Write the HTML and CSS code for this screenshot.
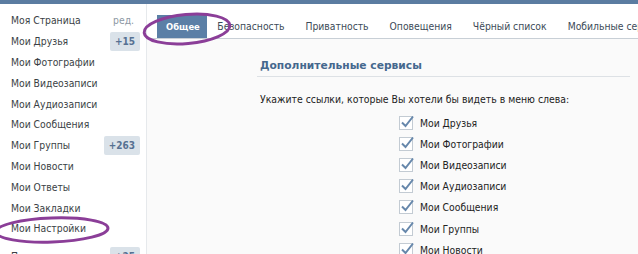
FILE: index.html
```html
<!DOCTYPE html>
<html lang="ru">
<head>
<meta charset="utf-8">
<link rel="stylesheet" href="styles.css">
</head>
<body>
<div class="topbar"></div>
<div class="layout">
  <nav class="sidebar">
    <div class="item"><span>Моя Страница</span><span class="edit">ред.</span></div>
    <div class="item"><span>Мои Друзья</span><span class="badge">+15</span></div>
    <div class="item"><span>Мои Фотографии</span></div>
    <div class="item"><span>Мои Видеозаписи</span></div>
    <div class="item"><span>Мои Аудиозаписи</span></div>
    <div class="item"><span>Мои Сообщения</span></div>
    <div class="item"><span>Мои Группы</span><span class="badge">+263</span></div>
    <div class="item"><span>Мои Новости</span></div>
    <div class="item"><span>Мои Ответы</span></div>
    <div class="item"><span>Мои Закладки</span></div>
    <div class="item"><span>Мои Настройки</span></div>
    <div class="item sep"><span>Приложения</span><span class="badge">+25</span></div>
  </nav>
  <main class="main">
    <div class="tabs">
      <div class="tab active">Общее</div>
      <div class="tab">Безопасность</div>
      <div class="tab">Приватность</div>
      <div class="tab">Оповещения</div>
      <div class="tab">Чёрный список</div>
      <div class="tab">Мобильные сервисы</div>
    </div>
    <div class="content">
      <div class="head">
        <div class="title">Дополнительные сервисы</div>
      </div>
      <div class="body">
        <div class="desc">Укажите ссылки, которые Вы хотели бы видеть в меню слева:</div>
        <div class="checks">
          <div class="check"><span class="box"><svg viewBox="0 0 16 16" width="16" height="16"><path d="M3 8.5 L6.5 12 L14 2.5" fill="none" stroke="#6687ab" stroke-width="2"/></svg></span>Мои Друзья</div>
          <div class="check"><span class="box"><svg viewBox="0 0 16 16" width="16" height="16"><path d="M3 8.5 L6.5 12 L14 2.5" fill="none" stroke="#6687ab" stroke-width="2"/></svg></span>Мои Фотографии</div>
          <div class="check"><span class="box"><svg viewBox="0 0 16 16" width="16" height="16"><path d="M3 8.5 L6.5 12 L14 2.5" fill="none" stroke="#6687ab" stroke-width="2"/></svg></span>Мои Видеозаписи</div>
          <div class="check"><span class="box"><svg viewBox="0 0 16 16" width="16" height="16"><path d="M3 8.5 L6.5 12 L14 2.5" fill="none" stroke="#6687ab" stroke-width="2"/></svg></span>Мои Аудиозаписи</div>
          <div class="check"><span class="box"><svg viewBox="0 0 16 16" width="16" height="16"><path d="M3 8.5 L6.5 12 L14 2.5" fill="none" stroke="#6687ab" stroke-width="2"/></svg></span>Мои Сообщения</div>
          <div class="check"><span class="box"><svg viewBox="0 0 16 16" width="16" height="16"><path d="M3 8.5 L6.5 12 L14 2.5" fill="none" stroke="#6687ab" stroke-width="2"/></svg></span>Мои Группы</div>
          <div class="check"><span class="box"><svg viewBox="0 0 16 16" width="16" height="16"><path d="M3 8.5 L6.5 12 L14 2.5" fill="none" stroke="#6687ab" stroke-width="2"/></svg></span>Мои Новости</div>
        </div>
      </div>
    </div>
  </main>
</div>
<svg class="marks" width="638" height="254" viewBox="0 0 638 254">
  <ellipse cx="187" cy="29" rx="43" ry="14.5" transform="rotate(-5 187 29)" fill="none" stroke="#8b3e98" stroke-width="3"/>
  <ellipse cx="52" cy="230" rx="56" ry="12" transform="rotate(-2 52 230)" fill="none" stroke="#8b3e98" stroke-width="3"/>
</svg>
</body>
</html>
```
FILE: styles.css
```css
html, body {
  margin: 0;
  padding: 0;
}
body {
  width: 638px;
  height: 254px;
  overflow: hidden;
  background: #ffffff;
  font-family: "DejaVu Sans Condensed", "DejaVu Sans", sans-serif;
  font-size: 10.3px;
  color: #2b2b2b;
  position: relative;
}
.topbar {
  height: 4px;
  background: #5b7ca1;
}
.layout {
  display: flex;
  height: 250px;
}
.sidebar {
  width: 147px;
  flex: none;
  border-right: 1px solid #e6e9ec;
  padding-top: 6px;
  box-sizing: border-box;
}
.item {
  height: 20.8px;
  display: flex;
  align-items: center;
  justify-content: space-between;
  padding: 0 6px 0 11px;
  color: #3a3f45;
  white-space: nowrap;
}
.item.sep {
  margin-top: 7px;
}
.edit {
  color: #8c97a3;
  padding-right: 6px;
}
.badge {
  background: #dae2e9;
  color: #567192;
  font-weight: bold;
  height: 19px;
  line-height: 19px;
  padding: 0 5px;
  border-radius: 2px;
  font-size: 10px;
}
.main {
  flex: 1;
  min-width: 0;
  background: #fafafa;
}
.tabs {
  display: flex;
  padding-left: 10px;
  padding-top: 11px;
  border-bottom: 1px solid #c8cfd6;
  background: #ffffff;
  white-space: nowrap;
}
.tab {
  height: 23px;
  line-height: 23px;
  padding: 0 10.5px;
  color: #3c4a58;
}
.tab.active {
  background: #5b7fa6;
  color: #ffffff;
  font-weight: bold;
  font-size: 9.4px;
  padding: 0 7px 0 9px;
}
.content {
  padding: 0 8px 0 110px;
}
.head {
  padding-top: 17px;
}
.title {
  height: 20px;
  line-height: 20px;
  border-bottom: 1px solid #dde1e5;
  color: #45688e;
  font-family: "DejaVu Sans", sans-serif;
  font-weight: bold;
  font-size: 10.7px;
  padding-left: 3px;
}
.desc {
  margin-top: 14px;
  line-height: 16px;
  padding-left: 3px;
  color: #222;
  font-size: 10.4px;
}
.checks {
  margin-top: 5px;
  padding-left: 142px;
}
.check {
  height: 21.2px;
  display: flex;
  align-items: center;
  color: #222;
}
.box {
  width: 12px;
  height: 12px;
  border: 1px solid #c3cbd3;
  background: #fff;
  margin-right: 7px;
  position: relative;
  flex: none;
}
.box svg {
  position: absolute;
  left: -1px;
  top: -3px;
}
.marks {
  position: absolute;
  left: 0;
  top: 0;
  pointer-events: none;
}
```
